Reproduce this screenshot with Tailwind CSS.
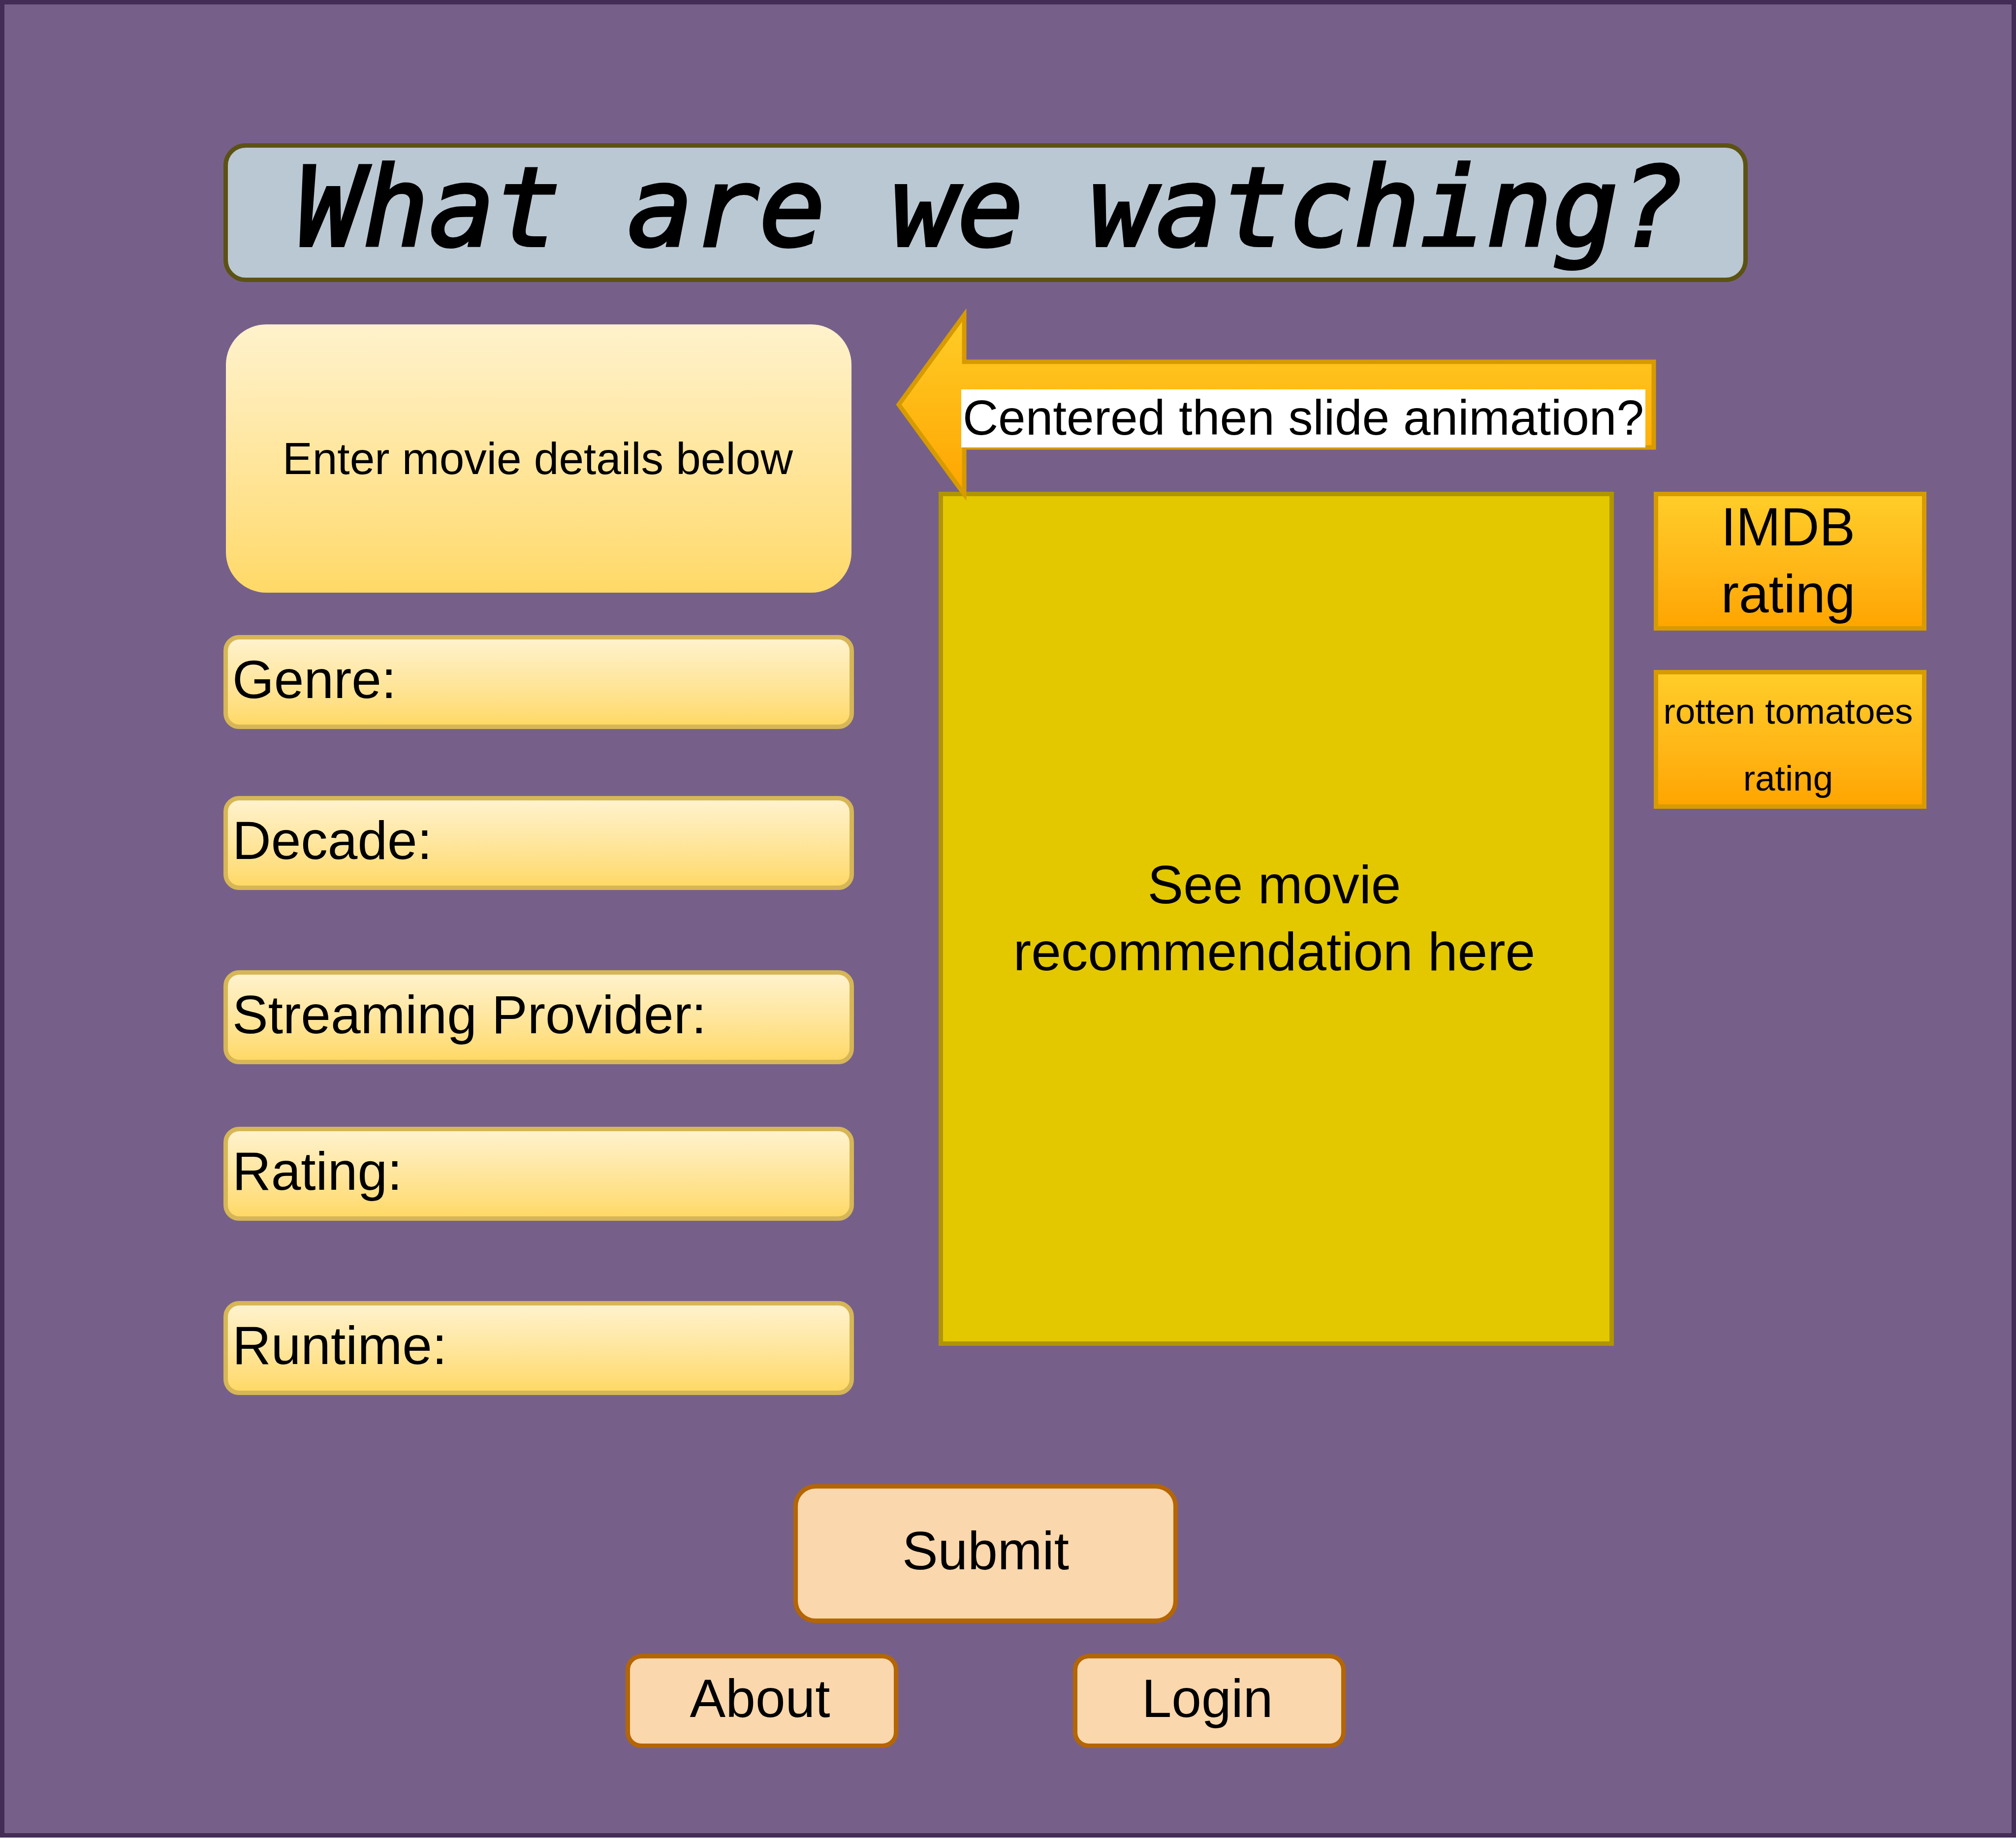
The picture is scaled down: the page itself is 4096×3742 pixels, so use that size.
<!DOCTYPE html>
<html lang="en">
<head>
<meta charset="utf-8">
<title>What are we watching?</title>
<script src="https://cdn.jsdelivr.net/npm/@tailwindcss/browser@4"></script>
</head>
<body class="flex min-h-screen flex-col bg-white pb-[9px] font-['Liberation_Sans',Arial,sans-serif] text-[109px] leading-[136px] text-black">
<div class="flex grow flex-col border-[9px] border-[#432D57] bg-[#76608A] pt-[282px] pr-[173px] pb-[172px] pl-[445px]">

  <header class="mr-[363px] flex h-[282px] items-center justify-center rounded-[45px] border-[9px] border-[#5C5213] bg-[#BAC8D3] pb-5 pl-5">
    <h1 class="whitespace-nowrap font-['DejaVu_Sans_Mono',monospace] text-[223px] leading-[250px] italic [-webkit-text-stroke:6px_black]">What are we watching?</h1>
  </header>

  <main class="grid grid-cols-[minmax(0,1372fr)_minmax(0,1372fr)_minmax(0,554fr)] gap-x-[81px]">
    <form id="search" class="flex flex-col pt-[86px] pr-[91px]">
      <h2 class="mx-[5px] mb-[86px] flex h-[545px] items-center justify-center rounded-[82px] bg-linear-to-b from-[#FFF2CC] to-[#FFD966] pr-1 text-[91px]">Enter movie details below</h2>

      <div class="mb-[136px] flex h-[191px] items-center rounded-[32px] border-[9px] border-[#D6B656] bg-linear-to-b from-[#FFF2CC] to-[#FFD966] px-[9px] pb-3">
        <label for="genre">Genre:</label>
        <input id="genre" type="text" class="min-w-0 flex-1 outline-none">
      </div>
      <div class="mb-[163px] flex h-[191px] items-center rounded-[32px] border-[9px] border-[#D6B656] bg-linear-to-b from-[#FFF2CC] to-[#FFD966] px-[9px] pb-3">
        <label for="decade">Decade:</label>
        <input id="decade" type="text" class="min-w-0 flex-1 outline-none">
      </div>
      <div class="mb-[127px] flex h-[191px] items-center rounded-[32px] border-[9px] border-[#D6B656] bg-linear-to-b from-[#FFF2CC] to-[#FFD966] px-[9px] pb-3">
        <label for="provider">Streaming Provider:</label>
        <input id="provider" type="text" class="min-w-0 flex-1 outline-none">
      </div>
      <div class="mb-[163px] flex h-[191px] items-center rounded-[32px] border-[9px] border-[#D6B656] bg-linear-to-b from-[#FFF2CC] to-[#FFD966] px-[9px] pb-3">
        <label for="rating">Rating:</label>
        <input id="rating" type="text" class="min-w-0 flex-1 outline-none">
      </div>
      <div class="flex h-[191px] items-center rounded-[32px] border-[9px] border-[#D6B656] bg-linear-to-b from-[#FFF2CC] to-[#FFD966] px-[9px] pb-3">
        <label for="runtime">Runtime:</label>
        <input id="runtime" type="text" class="min-w-0 flex-1 outline-none">
      </div>
    </form>

    <div class="col-span-2">
      <!-- Slide-in hint; its head overlaps the top edge of the recommendation panel -->
      <div class="relative z-10 mt-[54px] -mb-[18px] -ml-[86px] h-[390px] w-[1546px]">
        <svg class="block h-full w-full" viewBox="0 0 1546 390" aria-hidden="true">
          <defs>
            <linearGradient id="amber" x1="0" y1="0" x2="0" y2="1">
              <stop offset="0" stop-color="#FFCD28"/>
              <stop offset="1" stop-color="#FFA500"/>
            </linearGradient>
          </defs>
          <path d="M5 195 138 13V108H1539V282H138V377Z" fill="url(#amber)" stroke="#D79B00" stroke-width="9" stroke-miterlimit="10"/>
        </svg>
        <p class="absolute top-[164px] left-[132px] flex h-[118px] w-[1390px] items-center justify-center whitespace-nowrap bg-white pb-1 text-[100px]">Centered then slide animation?</p>
      </div>

      <div class="grid grid-cols-[minmax(0,1372fr)_minmax(0,554fr)] items-start gap-x-[81px]">
        <section class="flex h-[1735px] items-center justify-center border-[9px] border-[#B09500] bg-[#E3C800] pr-2 pb-1 text-center">
          <p>See movie<br>recommendation here</p>
        </section>
        <aside class="flex flex-col gap-20 text-center">
          <p class="flex h-[282px] items-center justify-center border-[9px] border-[#D79B00] bg-linear-to-b from-[#FFCD28] to-[#FFA500] pr-2 pb-1"><span>IMDB<br>rating</span></p>
          <p class="flex h-[282px] items-center justify-center whitespace-nowrap border-[9px] border-[#D79B00] bg-linear-to-b from-[#FFCD28] to-[#FFA500] pr-2 pb-1"><span><span class="text-[73px] leading-none">rotten tomatoes</span><br><span class="text-[73px] leading-none">rating</span></span></p>
        </aside>
      </div>
    </div>
  </main>

  <div class="mt-[181px] mr-[363px] flex flex-col items-center gap-[63px]">
    <button type="submit" form="search" class="h-[282px] w-[781px] rounded-[45px] border-[9px] border-[#B46504] bg-[#FAD7AC] pb-3">Submit</button>
    <nav class="flex gap-[355px]">
      <a href="#about" class="flex h-[191px] w-[554px] items-center justify-center rounded-[32px] border-[9px] border-[#B46504] bg-[#FAD7AC] pr-2 pb-3">About</a>
      <a href="#login" class="flex h-[191px] w-[554px] items-center justify-center rounded-[32px] border-[9px] border-[#B46504] bg-[#FAD7AC] pr-2 pb-3">Login</a>
    </nav>
  </div>
</div>
</body>
</html>
